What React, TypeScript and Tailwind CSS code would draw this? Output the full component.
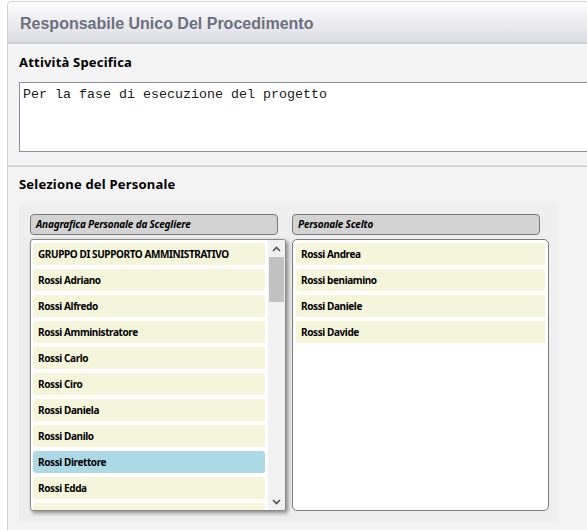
import React from "react";

const leftItems = [
  "GRUPPO DI SUPPORTO AMMINISTRATIVO",
  "Rossi Adriano",
  "Rossi Alfredo",
  "Rossi Amministratore",
  "Rossi Carlo",
  "Rossi Ciro",
  "Rossi Daniela",
  "Rossi Danilo",
  "Rossi Direttore",
  "Rossi Edda",
  "Rossi Elena",
];

const rightItems = ["Rossi Andrea", "Rossi beniamino", "Rossi Daniele", "Rossi Davide"];

const itemFont = { fontFamily: '"Noto Sans", "Open Sans", Arial, sans-serif' };

function Item({ label, selected }: { label: string; selected?: boolean }) {
  return (
    <div
      className={
        "h-[22px] mb-[4px] rounded-[3px] flex items-center pl-[5px] text-[10px] tracking-[-0.4px] font-bold text-black whitespace-nowrap " +
        (selected ? "bg-[#add8e6]" : "bg-[#f5f5dc]")
      }
      style={itemFont}
    >
      {label}
    </div>
  );
}

function Chevron({ up }: { up?: boolean }) {
  return (
    <svg width="9" height="6" viewBox="0 0 9 6" className="block">
      <polyline
        points={up ? "1,5 4.5,1.5 8,5" : "1,1 4.5,4.5 8,1"}
        fill="none"
        stroke="#505050"
        strokeWidth="1.6"
      />
    </svg>
  );
}

export default function App() {
  return (
    <div className="w-[587px] h-[530px] overflow-hidden bg-white pl-[7px] pt-[1px]">
      <div className="w-[620px] h-[540px] border-l border-t border-[#d2d2d2] rounded-tl-[5px] bg-[#f3f3f3] overflow-hidden">
        {/* Header */}
        <div
          className="h-[42px] flex items-center pl-[12px] pt-[4px] bg-gradient-to-b from-[#fdfdfd] to-[#dcdce4] border-b-2 border-[#d0d0d4] text-[16px] font-bold text-[#6b7080]"
          style={{ fontFamily: '"Liberation Sans", Arial, sans-serif' }}
        >
          Responsabile Unico Del Procedimento
        </div>

        {/* Attività Specifica */}
        <div className="pl-[11px] pt-[10px] pb-[12px]">
          <div
            className="h-[16px] leading-[16px] text-[13px] tracking-[0.2px] font-bold text-black"
            style={{ fontFamily: '"Noto Sans", "DejaVu Sans", sans-serif' }}
          >
            Attività Specifica
          </div>
          <div
            className="mt-[12px] w-[600px] h-[70px] bg-white border border-[#8e8e9c] pl-[3px] pt-[4px] text-[13.33px] leading-[16px] text-[#1a1a1a]"
            style={{ fontFamily: '"Liberation Mono", "Courier New", monospace' }}
          >
            Per la fase di esecuzione del progetto
          </div>
        </div>
        <div className="h-[1px] bg-[#fbfbfb]" />
        <div className="h-[2px] bg-[#d6d6d6]" />

        {/* Selezione del Personale */}
        <div className="pl-[11px] pt-[9px]">
          <div
            className="h-[16px] leading-[16px] text-[13px] tracking-[0.2px] font-bold text-black"
            style={{ fontFamily: '"Noto Sans", "DejaVu Sans", sans-serif' }}
          >
            Selezione del Personale
          </div>

          <div className="mt-[11px] w-[539px] h-[319px] bg-[#eeeeee] pl-[11px] pt-[11px] flex gap-[6px]">
            {/* Left column */}
            <div className="w-[256px] flex flex-col">
              <div
                className="w-[248px] h-[21px] rounded-[4px] border border-[#7a7a7a] bg-[#d3d3d3] flex items-center pl-[5px] text-[10px] tracking-[-0.2px] font-bold italic text-black"
                style={itemFont}
              >
                Anagrafica Personale da Scegliere
              </div>
              <div className="mt-[4px] h-[272px] bg-white border border-[#8a8a8a] rounded-[3px] shadow-[2px_2px_4px_rgba(0,0,0,0.45)] flex overflow-hidden">
                <div className="flex-1 pl-[2px] pt-[3px] pr-[3px] overflow-hidden">
                  {leftItems.map((l) => (
                    <Item key={l} label={l} selected={l === "Rossi Direttore"} />
                  ))}
                </div>
                <div className="w-[17px] bg-[#f1f1f1] flex flex-col">
                  <div className="h-[17px] flex items-center justify-center">
                    <Chevron up />
                  </div>
                  <div className="mx-[1px] h-[45px] bg-[#c1c1c1]" />
                  <div className="flex-1" />
                  <div className="h-[17px] flex items-center justify-center">
                    <Chevron />
                  </div>
                </div>
              </div>
            </div>

            {/* Right column */}
            <div className="w-[257px] flex flex-col">
              <div
                className="w-[248px] h-[21px] rounded-[4px] border border-[#7a7a7a] bg-[#d3d3d3] flex items-center pl-[5px] text-[10px] tracking-[-0.2px] font-bold italic text-black"
                style={itemFont}
              >
                Personale Scelto
              </div>
              <div className="mt-[4px] h-[272px] bg-white border border-[#7a7a7a] rounded-[5px] p-[3px] overflow-hidden">
                {rightItems.map((l) => (
                  <Item key={l} label={l} />
                ))}
              </div>
            </div>
          </div>
        </div>
      </div>
    </div>
  );
}
